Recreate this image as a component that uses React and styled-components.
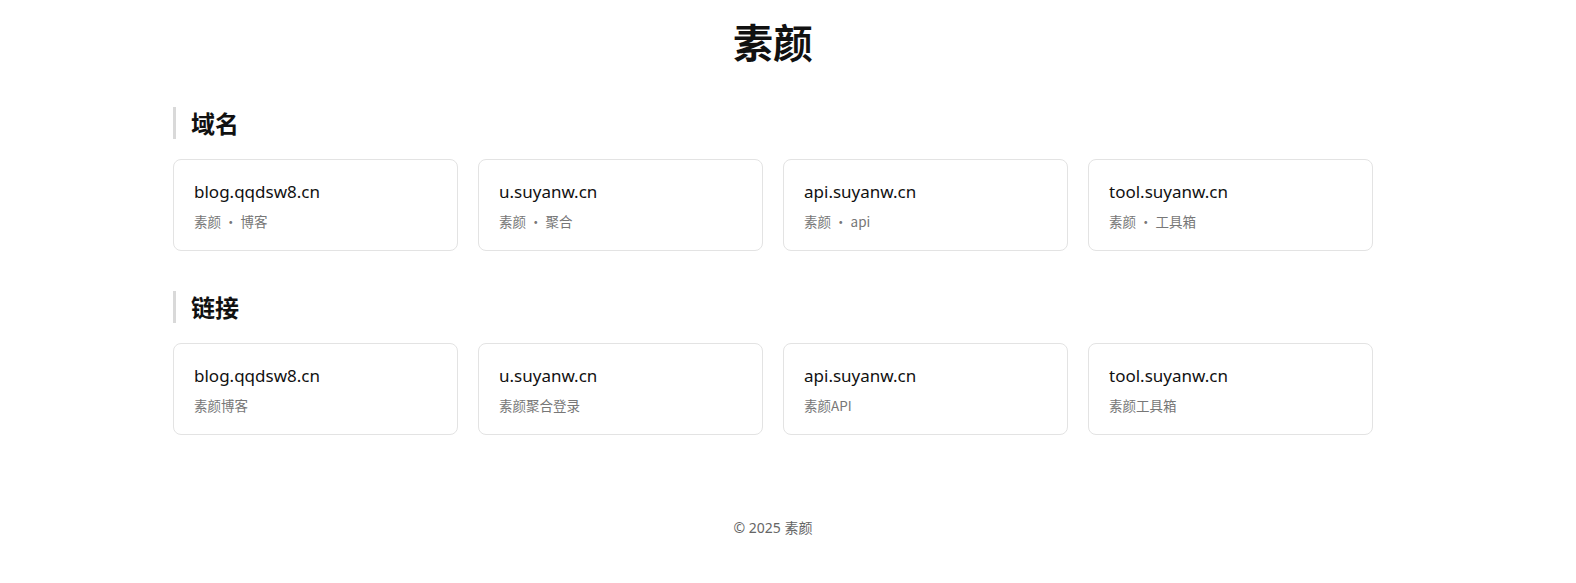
import React from "react";
import styled, { createGlobalStyle } from "styled-components";

const Global = createGlobalStyle`
  html, body { margin: 0; padding: 0; background: #fff; }
  body {
    font-family: "Noto Sans", "Noto Sans CJK SC", sans-serif;
    color: #111;
  }
`;

const Page = styled.div`
  padding: 12px 30px 0 0;
`;

const Container = styled.main`
  max-width: 1200px;
  margin: 0 auto;
`;

const Title = styled.h1`
  margin: 0 0 37px;
  text-align: center;
  font-size: 40px;
  line-height: 58px;
  font-weight: 700;
  font-family: "Noto Sans CJK SC", sans-serif;
`;

const Section = styled.section`
  margin-bottom: 40px;
`;

const SectionTitle = styled.h2`
  margin: 0 0 20px;
  padding-left: 15px;
  border-left: 3px solid #d9d9d9;
  font-size: 24px;
  line-height: 32px;
  font-weight: 700;
  font-family: "Noto Sans CJK SC", sans-serif;
`;

const Grid = styled.div`
  display: grid;
  grid-template-columns: repeat(4, 1fr);
  gap: 20px;
`;

const Card = styled.a`
  display: flex;
  flex-direction: column;
  gap: 7px;
  height: 92px;
  box-sizing: border-box;
  padding: 20px 20px;
  border: 1px solid #e3e3e3;
  border-radius: 8px;
  text-decoration: none;
  color: inherit;
`;

const CardTitle = styled.div`
  font-size: 17px;
  line-height: 24px;
  color: #111;
`;

const CardDesc = styled.div`
  font-size: 13.5px;
  line-height: 20px;
  color: #777;
  font-family: "Noto Sans CJK SC", sans-serif;
`;

const Footer = styled.footer`
  text-align: center;
  font-size: 14px;
  color: #666;
  padding: 42px 0 20px;
`;

const sections = [
  {
    name: "域名",
    items: [
      ["blog.qqdsw8.cn", "素颜 · 博客"],
      ["u.suyanw.cn", "素颜 · 聚合"],
      ["api.suyanw.cn", "素颜 · api"],
      ["tool.suyanw.cn", "素颜 · 工具箱"],
    ],
  },
  {
    name: "链接",
    items: [
      ["blog.qqdsw8.cn", "素颜博客"],
      ["u.suyanw.cn", "素颜聚合登录"],
      ["api.suyanw.cn", "素颜API"],
      ["tool.suyanw.cn", "素颜工具箱"],
    ],
  },
];

export default function App() {
  return (
    <Page>
      <Global />
      <Container>
        <Title>素颜</Title>
        {sections.map((s) => (
          <Section key={s.name}>
            <SectionTitle>{s.name}</SectionTitle>
            <Grid>
              {s.items.map(([host, desc]) => (
                <Card key={host + desc} href={"https://" + host}>
                  <CardTitle>{host}</CardTitle>
                  <CardDesc>{desc}</CardDesc>
                </Card>
              ))}
            </Grid>
          </Section>
        ))}
        <Footer>© 2025 素颜</Footer>
      </Container>
    </Page>
  );
}
